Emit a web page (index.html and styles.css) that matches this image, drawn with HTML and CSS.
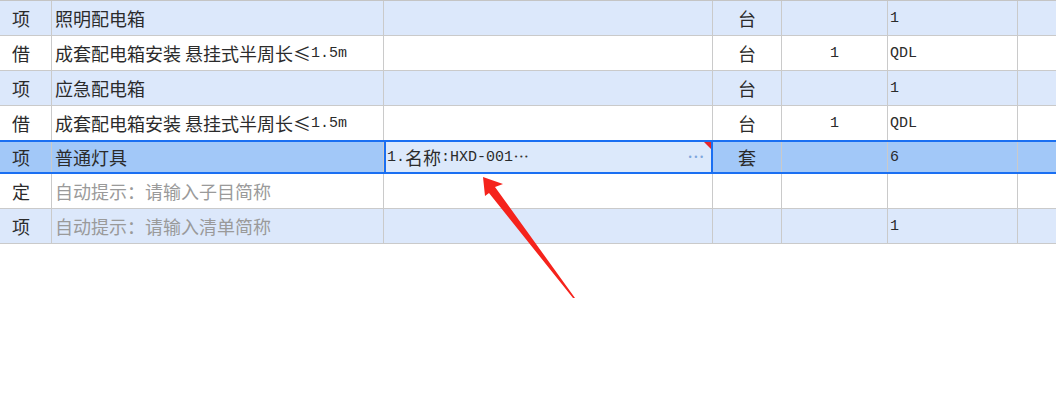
FILE: index.html
```html
<!DOCTYPE html>
<html lang="zh-CN">
<head>
  <meta charset="UTF-8" />
  <meta name="viewport" content="width=device-width, initial-scale=1.0"/>
  <title>清单编辑</title>
  <link rel="stylesheet" href="styles.css">
</head>
<body>
  <div class="sheet">
    <div class="row alt">
      <div class="cell c-type">项</div>
      <div class="cell c-name">照明配电箱</div>
      <div class="cell c-feat"></div>
      <div class="cell c-unit">台</div>
      <div class="cell c-qty"></div>
      <div class="cell c-expr"><span class="lat">1</span></div>
      <div class="cell c-rest"></div>
    </div>
    <div class="row">
      <div class="cell c-type">借</div>
      <div class="cell c-name">成套配电箱安装 悬挂式半周长≤<span class="lat">1.5m</span></div>
      <div class="cell c-feat"></div>
      <div class="cell c-unit">台</div>
      <div class="cell c-qty"><span class="lat">1</span></div>
      <div class="cell c-expr"><span class="lat">QDL</span></div>
      <div class="cell c-rest"></div>
    </div>
    <div class="row alt">
      <div class="cell c-type">项</div>
      <div class="cell c-name">应急配电箱</div>
      <div class="cell c-feat"></div>
      <div class="cell c-unit">台</div>
      <div class="cell c-qty"></div>
      <div class="cell c-expr"><span class="lat">1</span></div>
      <div class="cell c-rest"></div>
    </div>
    <div class="row">
      <div class="cell c-type">借</div>
      <div class="cell c-name">成套配电箱安装 悬挂式半周长≤<span class="lat">1.5m</span></div>
      <div class="cell c-feat"></div>
      <div class="cell c-unit">台</div>
      <div class="cell c-qty"><span class="lat">1</span></div>
      <div class="cell c-expr"><span class="lat">QDL</span></div>
      <div class="cell c-rest"></div>
    </div>
    <div class="row selected">
      <div class="cell c-type">项</div>
      <div class="cell c-name">普通灯具</div>
      <div class="cell c-feat editing">
        <span class="lat">1.</span>名称<span class="lat">:HXD-001</span><span class="dots">•••</span>
        <span class="more">•••</span>
        <span class="flag"></span>
      </div>
      <div class="cell c-unit">套</div>
      <div class="cell c-qty"></div>
      <div class="cell c-expr"><span class="lat">6</span></div>
      <div class="cell c-rest"></div>
    </div>
    <div class="row">
      <div class="cell c-type">定</div>
      <div class="cell c-name hint">自动提示：请输入子目简称</div>
      <div class="cell c-feat"></div>
      <div class="cell c-unit"></div>
      <div class="cell c-qty"></div>
      <div class="cell c-expr"></div>
      <div class="cell c-rest"></div>
    </div>
    <div class="row alt">
      <div class="cell c-type">项</div>
      <div class="cell c-name hint">自动提示：请输入清单简称</div>
      <div class="cell c-feat"></div>
      <div class="cell c-unit"></div>
      <div class="cell c-qty"></div>
      <div class="cell c-expr"><span class="lat">1</span></div>
      <div class="cell c-rest"></div>
    </div>
  </div>

  <svg class="arrow" width="1056" height="405" viewBox="0 0 1056 405">
    <polygon points="483,177 503,184 495,187 575,298 573,298 489,193 485,196" fill="#f5231c"/>
  </svg>
</body>
</html>
```

FILE: styles.css
```css
* {
  box-sizing: border-box;
}

body {
  margin: 0;
  background: #ffffff;
  font-family: "Noto Sans CJK SC", sans-serif;
  font-size: 18px;
  color: #2b2b2b;
}

.sheet {
  border-top: 1px solid #c4c4c4;
}

.row {
  display: grid;
  grid-template-columns: 52px 332px 329px 69px 106px 130px 1fr;
  height: 35px;
  border-bottom: 1px solid #cacaca;
  background: #ffffff;
}

.row.alt {
  background: #dce8fb;
}

.row.selected {
  height: 34px;
  margin-top: -1px;
  border-top: 2px solid #1a6ff2;
  border-bottom: 2px solid #1a6ff2;
  background: #a2c8f8;
}

.cell {
  display: flex;
  align-items: center;
  border-right: 1px solid #cacaca;
  white-space: nowrap;
  overflow: hidden;
  line-height: 1;
}

.c-type {
  padding-left: 12px;
}

.c-name {
  padding-left: 3px;
}

.c-feat {
  padding-left: 3px;
  position: relative;
}

.c-unit, .c-qty {
  justify-content: center;
}

.c-expr {
  padding-left: 2px;
}

.c-rest {
  border-right: none;
}

.hint {
  color: #9a9a9a;
}

.lat {
  font-family: "Liberation Mono", monospace;
  font-size: 15px;
}

.editing {
  background: #dce9fb;
  border-right-color: #1a6ff2;
  box-shadow: inset 2px 0 0 #1a6ff2, inset -1px 0 0 #1a6ff2;
}

.editing .dots {
  font-family: "DejaVu Sans", sans-serif;
  font-size: 7px;
  letter-spacing: 1px;
  margin-left: 1px;
  color: #333;
}

.editing .more {
  position: absolute;
  right: 7px;
  top: 12px;
  font-family: "DejaVu Sans", sans-serif;
  font-size: 8px;
  letter-spacing: 1px;
  color: #7ea6dc;
}

.editing .flag {
  position: absolute;
  top: 0;
  right: 1px;
  width: 0;
  height: 0;
  border-top: 7px solid #e8262b;
  border-left: 7px solid transparent;
}

.arrow {
  position: absolute;
  left: 0;
  top: 0;
  pointer-events: none;
}
```
